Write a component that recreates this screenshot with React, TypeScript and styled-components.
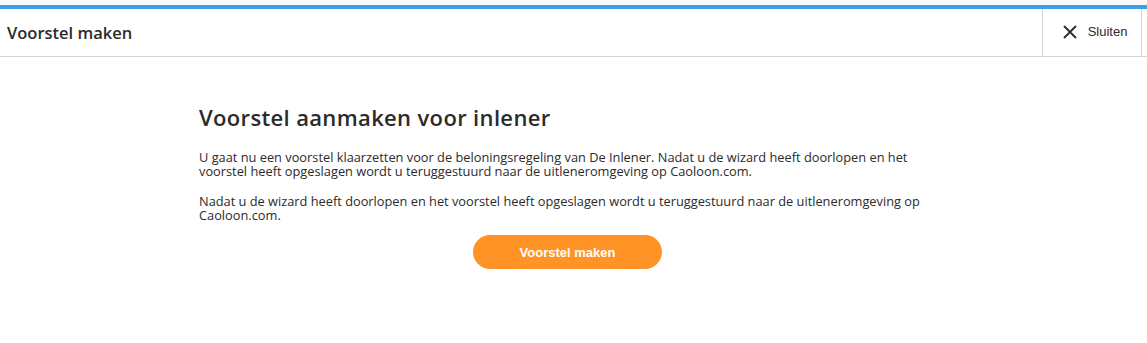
import React from "react";
import styled, { createGlobalStyle } from "styled-components";

const Global = createGlobalStyle`
  html, body { margin: 0; padding: 0; background: #ffffff; }
  body { font-family: "Open Sans", "DejaVu Sans", sans-serif; color: #2b2b2b; }
`;

const Page = styled.div`
  width: 1147px;
  height: 343px;
  display: flex;
  flex-direction: column;
  background: #ffffff;
`;

const TopStrip = styled.div`
  height: 5px;
  background: #f7f7fc;
`;

const AccentBar = styled.div`
  height: 4px;
  background: #3a9fe2;
`;

const Header = styled.header`
  height: 47px;
  display: flex;
  align-items: stretch;
  border-bottom: 1px solid #d4d4d4;
`;

const HeaderTitle = styled.h1`
  flex: 1;
  margin: 0;
  padding-left: 7px;
  display: flex;
  align-items: center;
  font-family: "Open Sans", sans-serif;
  font-size: 16.5px;
  font-weight: 600;
  color: #2b2b2b;
`;

const CloseButton = styled.button`
  width: 100px;
  margin-right: 5px;
  border: none;
  border-left: 1px solid #d4d4d4;
  border-right: 1px solid #d4d4d4;
  background: #ffffff;
  display: flex;
  align-items: center;
  justify-content: center;
  gap: 11px;
  padding: 0 0 2px 6px;
  font-family: "Liberation Sans", Arial, sans-serif;
  font-size: 13px;
  color: #2b2b2b;
  cursor: pointer;
`;

const Main = styled.main`
  display: flex;
  justify-content: center;
  padding-top: 47px;
  padding-right: 12px;
`;

const Content = styled.section`
  width: 737px;
  display: flex;
  flex-direction: column;
`;

const Heading = styled.h2`
  margin: 0 0 20px 0;
  font-family: "Open Sans", sans-serif;
  font-size: 22px;
  font-weight: 600;
  letter-spacing: 0.35px;
  color: #2b2b2b;
  line-height: 26px;
`;

const Paragraph = styled.p`
  margin: 0 0 16px 0;
  font-family: "Open Sans", sans-serif;
  font-size: 12.8px;
  line-height: 14px;
  color: #2b2b2b;
`;

const Actions = styled.div`
  display: flex;
  justify-content: center;
  margin-top: -3px;
`;

const PrimaryButton = styled.button`
  width: 189px;
  height: 34px;
  border: none;
  border-radius: 17px;
  background: #ff9326;
  color: #ffffff;
  font-family: "Liberation Sans", Arial, sans-serif;
  font-size: 13px;
  font-weight: 700;
  cursor: pointer;
`;

const CloseIcon = () => (
  <svg width="14" height="14" viewBox="0 0 14 14" aria-hidden="true">
    <path d="M1 1 L13 13 M13 1 L1 13" stroke="#2b2b2b" strokeWidth="1.8" fill="none" />
  </svg>
);

export default function App() {
  return (
    <Page>
      <Global />
      <TopStrip />
      <AccentBar />
      <Header>
        <HeaderTitle>Voorstel maken</HeaderTitle>
        <CloseButton>
          <CloseIcon />
          Sluiten
        </CloseButton>
      </Header>
      <Main>
        <Content>
          <Heading>Voorstel aanmaken voor inlener</Heading>
          <Paragraph>
            U gaat nu een voorstel klaarzetten voor de beloningsregeling van De Inlener. Nadat u de wizard heeft doorlopen en het voorstel heeft opgeslagen wordt u teruggestuurd naar de uitleneromgeving op Caoloon.com.
          </Paragraph>
          <Paragraph>
            Nadat u de wizard heeft doorlopen en het voorstel heeft opgeslagen wordt u teruggestuurd naar de uitleneromgeving op Caoloon.com.
          </Paragraph>
          <Actions>
            <PrimaryButton>Voorstel maken</PrimaryButton>
          </Actions>
        </Content>
      </Main>
    </Page>
  );
}
